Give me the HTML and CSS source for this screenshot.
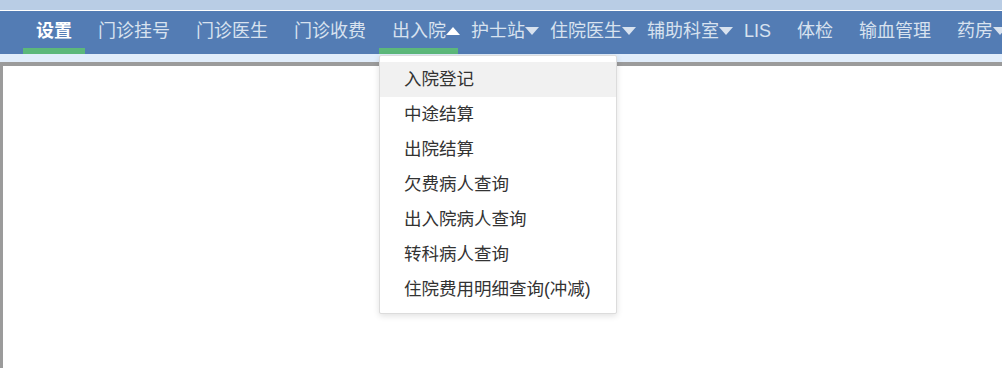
FILE: index.html
```html
<!DOCTYPE html>
<html lang="zh-CN">
<head>
<meta charset="utf-8">
<title>菜单</title>
<link rel="stylesheet" href="styles.css">
</head>
<body>
<div class="page">
  <div class="topstrip"></div>
  <nav class="nav">
    <ul class="menu">
      <li class="item active strong">设置</li>
      <li class="item">门诊挂号</li>
      <li class="item">门诊医生</li>
      <li class="item">门诊收费</li>
      <li class="item active open">出入院<span class="arrow up"></span>
        <ul class="dropdown">
          <li class="ditem hover">入院登记</li>
          <li class="ditem">中途结算</li>
          <li class="ditem">出院结算</li>
          <li class="ditem">欠费病人查询</li>
          <li class="ditem">出入院病人查询</li>
          <li class="ditem">转科病人查询</li>
          <li class="ditem">住院费用明细查询(冲减)</li>
        </ul>
      </li>
      <li class="item">护士站<span class="arrow"></span></li>
      <li class="item">住院医生<span class="arrow"></span></li>
      <li class="item">辅助科室<span class="arrow"></span></li>
      <li class="item">LIS</li>
      <li class="item">体检</li>
      <li class="item">输血管理</li>
      <li class="item">药房<span class="arrow"></span></li>
    </ul>
  </nav>
  <div class="substrip"></div>
  <main class="content"></main>
</div>
</body>
</html>
```

FILE: styles.css
```css
html, body {
  margin: 0;
  padding: 0;
  height: 100%;
  overflow: hidden;
}
body {
  font-family: "Liberation Sans", "Noto Sans CJK SC", sans-serif;
  background: #ffffff;
}
.page {
  display: flex;
  flex-direction: column;
  height: 100%;
}
.topstrip {
  height: 10px;
  background: #b9cde5;
  flex: none;
}
.nav {
  flex: none;
  height: 43px;
  border-top: 1px solid #ffffff;
  background: #537cb4;
  overflow: visible;
  position: relative;
  z-index: 2;
}
.menu {
  list-style: none;
  margin: 0;
  padding: 0 0 0 23px;
  display: flex;
  white-space: nowrap;
}
.item {
  position: relative;
  box-sizing: border-box;
  height: 43px;
  padding: 3px 13px 0;
  line-height: 34px;
  font-size: 18px;
  color: #d8e2ef;
  border-bottom: 6px solid transparent;
  flex: none;
}
.item.active {
  border-bottom-color: #5cb87a;
}
.item.strong {
  color: #ffffff;
  font-weight: bold;
}
.arrow {
  display: inline-block;
  width: 0;
  height: 0;
  margin-right: -15px;
  border-left: 7.5px solid transparent;
  border-right: 7.5px solid transparent;
  border-top: 8px solid #d8e2ef;
  vertical-align: middle;
  position: relative;
  top: -1px;
}
.arrow.up {
  border-top: 0;
  border-bottom: 8px solid #ffffff;
}
.dropdown {
  position: absolute;
  left: 0;
  top: 44px;
  width: 238px;
  box-sizing: border-box;
  margin: 0;
  padding: 6px 0;
  list-style: none;
  background: #ffffff;
  border: 1px solid #dcdcdc;
  box-shadow: 0 2px 6px rgba(0, 0, 0, 0.12);
  border-radius: 2px;
}
.ditem {
  height: 35px;
  line-height: 35px;
  padding-left: 24px;
  font-size: 17.5px;
  font-weight: normal;
  color: #333333;
}
.ditem.hover {
  background: #f1f1f1;
}
.substrip {
  flex: none;
  height: 8px;
  background: #e1edfb;
}
.content {
  flex: 1;
  background: #ffffff;
  border-top: 4px solid #9b9b9b;
  border-left: 3px solid #9b9b9b;
}
```
